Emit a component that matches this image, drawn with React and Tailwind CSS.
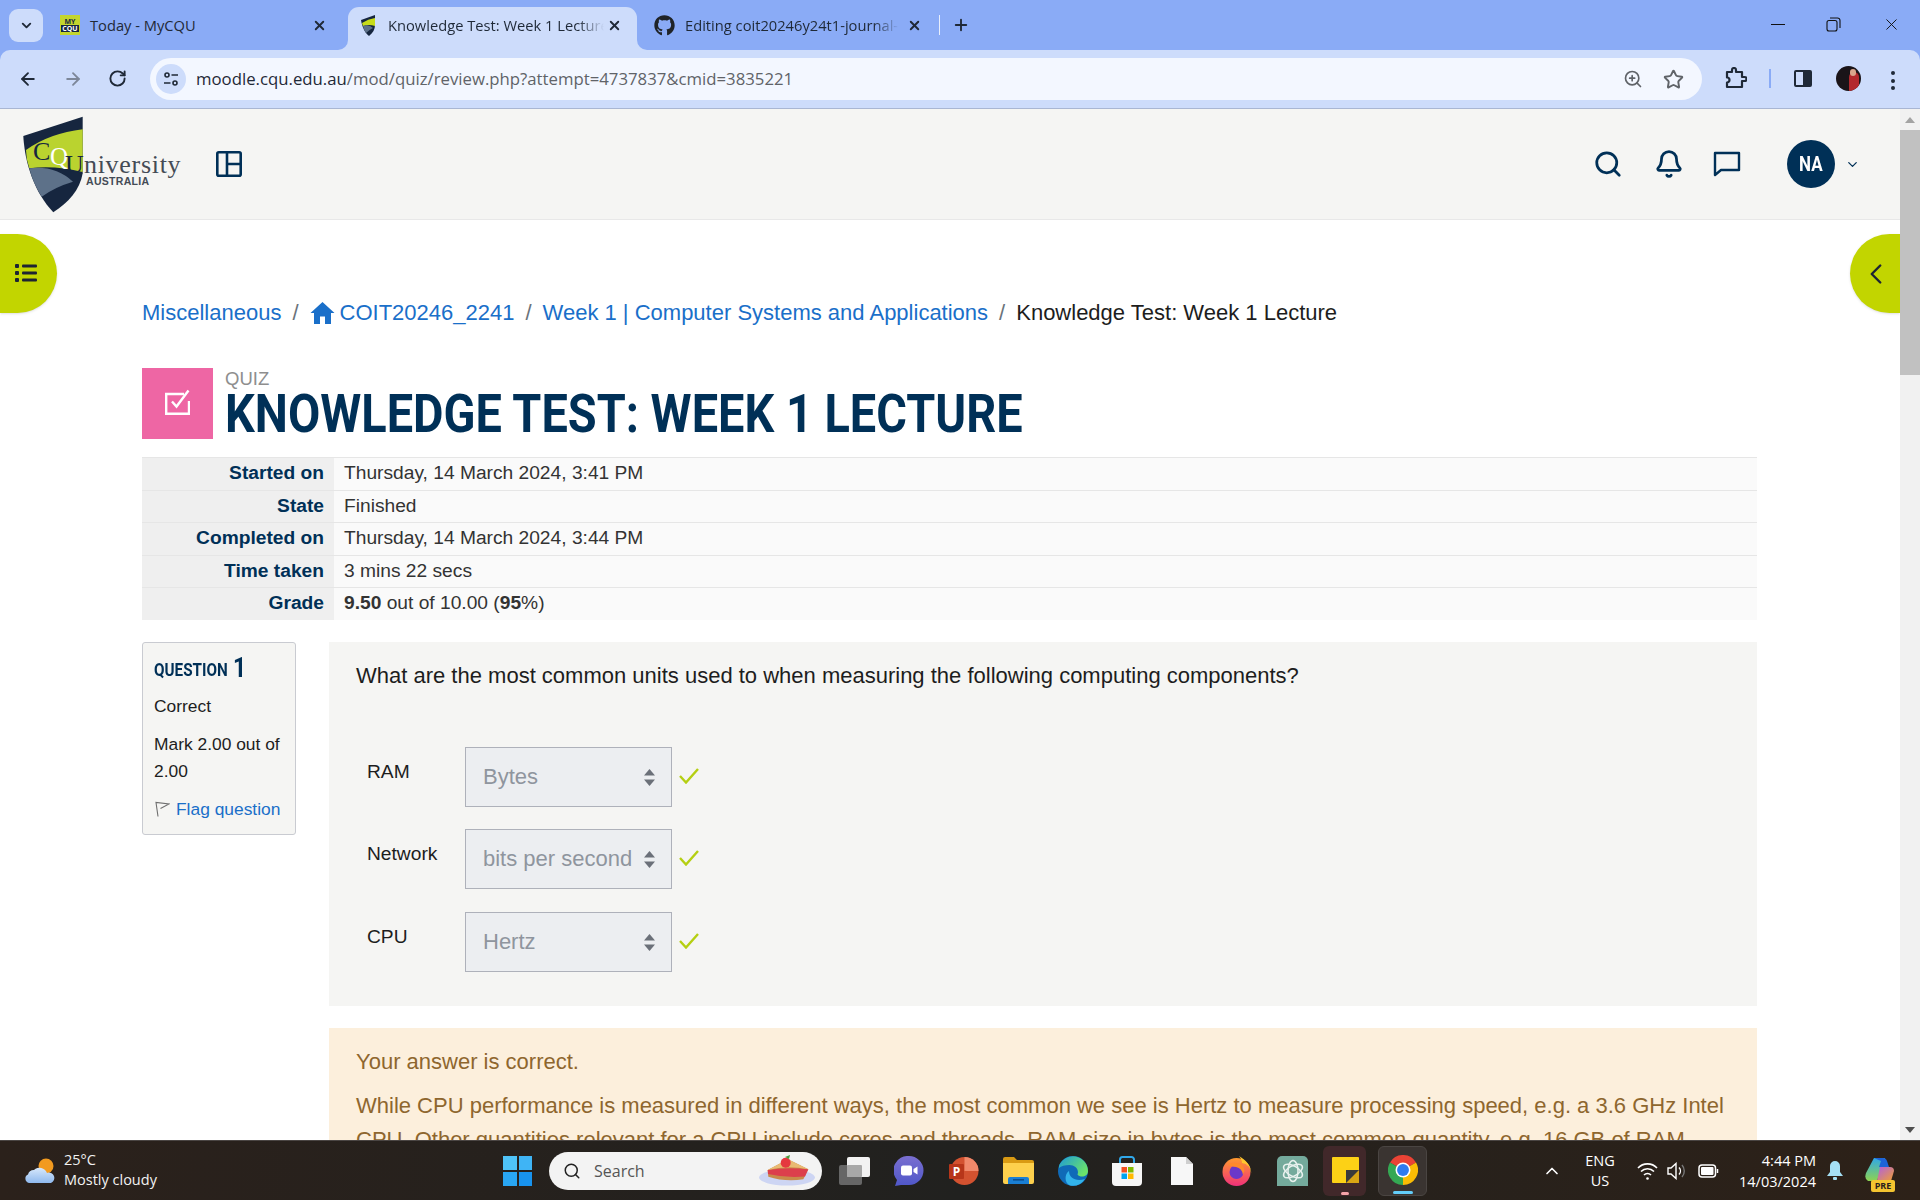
import {
  ArrowLeft,
  ArrowRight,
  RotateCw,
  ZoomIn,
  Star,
  X,
  Plus,
  ChevronDown,
  ChevronUp,
  ChevronLeft,
  Search,
  Bell,
} from "lucide-react";
import { FaGithub } from "react-icons/fa";

function ChromeLogo({ size = 30 }) {
  return (
    <svg width={size} height={size} viewBox="0 0 48 48">
      <path d="M24 24L3.2 12A24 24 0 0 1 44.8 12Z" fill="#ea4335" />
      <path d="M24 24L44.8 12A24 24 0 0 1 24 48Z" fill="#fbbc04" />
      <path d="M24 24L24 48A24 24 0 0 1 3.2 12Z" fill="#34a853" />
      <circle cx="24" cy="24" r="12" fill="#fff" />
      <circle cx="24" cy="24" r="9.5" fill="#2f7bf0" />
    </svg>
  );
}

function CquLogo() {
  return (
    <svg width="170" height="100" viewBox="0 0 170 100" className="ml-[20px] mt-[2px] shrink-0">
      <path d="M62.7 1.7L3.3 21C5 50 15 78 33.3 97.3C48 88 60 75 62.7 58.3Z" fill="#16263f" />
      <path d="M6 35Q30 18 62.7 14.3V57Q35 50 9.3 53.3Q6 44 6 35Z" fill="#bad32f" />
      <path d="M9.3 53.3Q35 50 53 66.7Q35 72 21.7 81.7Q13 68 9.3 53.3Z" fill="#5d7189" />
      <text x="13" y="45" className="font-['Liberation_Serif'] text-[26px]" fill="#16263f">C</text>
      <text x="30" y="50" className="font-['Liberation_Serif'] text-[25px]" fill="#fff">Q</text>
      <text x="45" y="58" className="font-['Liberation_Serif'] text-[26px]" fill="#16263f">U</text>
      <text x="64" y="58" className="font-['Liberation_Serif'] text-[26px] tracking-[0.7px]" fill="#444b55">niversity</text>
      <text x="66" y="70" className="font-['Liberation_Sans'] font-bold text-[10.5px] tracking-[0.3px]" fill="#444b55">AUSTRALIA</text>
    </svg>
  );
}

function TabStrip() {
  return (
    <div className="h-[50px] bg-[#8aabf6] flex shrink-0 text-[14.7px] font-['Open_Sans',sans-serif] text-[#1f2937]">
      <div className="ml-[9px] mt-[9px] w-[34px] h-[33px] rounded-[9px] bg-[#cddcfb] flex items-center justify-center">
        <ChevronDown size={15} strokeWidth={3} />
      </div>
      <div className="ml-[17px] w-[288px] h-[50px] flex items-center">
        <div className="w-[20px] h-[20px] bg-[#c3d52d] flex flex-col items-center justify-center text-[7px] leading-[7px] font-bold text-[#16263f]">
          <span>MY</span>
          <span className="bg-[#16263f] text-white px-[1px]">CQU</span>
        </div>
        <span className="ml-[10px] w-[220px] whitespace-nowrap">Today - MyCQU</span>
        <X size={15} strokeWidth={3} className="ml-[2px]" />
      </div>
      <div className="mt-[7px] w-[289px] h-[43px] rounded-t-[11px] bg-[#cddcfb] flex items-center pb-[7px] relative">
        <div className="absolute -left-[10px] bottom-0 w-[10px] h-[10px] bg-[#cddcfb]">
          <div className="w-full h-full rounded-br-[10px] bg-[#8aabf6]" />
        </div>
        <div className="absolute -right-[10px] bottom-0 w-[10px] h-[10px] bg-[#cddcfb]">
          <div className="w-full h-full rounded-bl-[10px] bg-[#8aabf6]" />
        </div>
        <svg width="15" height="21" viewBox="0 0 15 21" className="ml-[13px]">
          <path d="M14 0L0 5C1 12 4 18 8 21C12 18 14 14 14 10Z" fill="#16263f" />
          <path d="M1 8Q7 4 14 3V11Q8 9 2 11Z" fill="#c7dc1a" />
          <path d="M2 11Q8 9 12 13Q8 15 5 18Q3 15 2 11Z" fill="#5d7189" />
        </svg>
        <span className="ml-[12px] w-[216px] overflow-hidden whitespace-nowrap [mask-image:linear-gradient(to_right,black_88%,transparent)]">
          Knowledge Test: Week 1 Lecture
        </span>
        <X size={15} strokeWidth={3} className="ml-[3px]" />
      </div>
      <div className="ml-[17px] w-[268px] h-[50px] flex items-center">
        <FaGithub size={21} color="#1f2328" />
        <span className="ml-[10px] w-[214px] overflow-hidden whitespace-nowrap [mask-image:linear-gradient(to_right,black_88%,transparent)]">
          Editing coit20246y24t1-journal-
        </span>
        <X size={15} strokeWidth={3} className="ml-[8px]" />
      </div>
      <div className="ml-[17px] mt-[15px] w-[1px] h-[20px] bg-[#e8eefc]" />
      <Plus size={18} strokeWidth={2.5} className="ml-[12px] mt-[16px]" />
      <div className="ml-auto flex items-start pt-[17px] text-[#111]">
        <div className="w-[14px] h-[1px] bg-[#111] mt-[7px]" />
        <svg width="15" height="15" viewBox="0 0 15 15" className="ml-[41px]" fill="none" stroke="#111" strokeWidth="1.1">
          <rect x="1" y="3.5" width="10" height="10.5" rx="2" />
          <path d="M4 1H11.5A2.5 2.5 0 0 1 14 3.5V11" />
        </svg>
        <X size={19} strokeWidth={1.2} className="ml-[41px] mr-[19px] -mt-[2px]" />
      </div>
    </div>
  );
}

function Toolbar() {
  return (
    <div className="h-[59px] bg-[#cddcfb] border-b border-[#a9b6d3] rounded-t-[10px] flex items-start shrink-0 font-['Open_Sans',sans-serif]">
      <ArrowLeft size={20} strokeWidth={2.2} className="ml-[18px] mt-[19px] text-[#1f2937]" />
      <ArrowRight size={20} strokeWidth={2.2} className="ml-[25px] mt-[19px] text-[#7d8799]" />
      <RotateCw size={19} strokeWidth={2.4} className="ml-[25px] mt-[19px] text-[#1f2937]" />
      <div className="ml-[23px] mt-[8px] w-[1552px] h-[42px] rounded-full bg-[#f3f7ff] flex items-center">
        <div className="ml-[6px] w-[30px] h-[30px] rounded-full bg-[#cddcfb] flex items-center justify-center">
          <svg width="16" height="16" viewBox="0 0 16 16" fill="none" stroke="#1f2937" strokeWidth="1.6">
            <circle cx="4" cy="4" r="2" />
            <path d="M8.5 4H15M1 12H7.5" />
            <circle cx="12" cy="12" r="2" />
          </svg>
        </div>
        <span className="ml-[10px] text-[16.75px] whitespace-nowrap text-[#1f2937]">
          moodle.cqu.edu.au<span className="text-[#5f6368]">/mod/quiz/review.php?attempt=4737837&amp;cmid=3835221</span>
        </span>
        <ZoomIn size={20} strokeWidth={2} className="ml-auto text-[#5f6368]" />
        <Star size={21} strokeWidth={2.2} className="ml-[20px] mr-[18px] text-[#5f6368]" />
      </div>
      <svg width="22" height="22" viewBox="0 0 22 22" className="ml-[23px] mt-[17px]" fill="none" stroke="#1f2937" strokeWidth="2.2" strokeLinejoin="round">
        <path d="M2 5H7V3A2 2 0 0 1 11 3V5H17V10H19.5A2 2 0 0 1 19.5 14H17V20H2V15.5A2.5 2.5 0 0 0 2 10.5Z" />
      </svg>
      <div className="ml-[22px] mt-[19px] w-[2px] h-[19px] bg-[#8aabf6]" />
      <div className="ml-[23px] mt-[20px] w-[18px] h-[17px] rounded-[2px] border-2 border-[#1f2937] flex justify-end">
        <div className="w-[7px] h-full bg-[#1f2937] order-first" />
      </div>
      <div className="ml-[24px] mt-[16px] w-[25px] h-[25px] rounded-full bg-[#1a1418] overflow-hidden relative">
        <div className="absolute right-[2px] top-[6px] w-[10px] h-[19px] bg-[#b3282d] rounded-t-[5px]" />
        <div className="absolute right-[5px] top-[3px] w-[6px] h-[7px] bg-[#d9a58c] rounded-full" />
      </div>
      <div className="ml-[30px] mt-[21px] flex flex-col gap-[3.5px]">
        <div className="w-[4px] h-[4px] rounded-full bg-[#1f2937]" />
        <div className="w-[4px] h-[4px] rounded-full bg-[#1f2937]" />
        <div className="w-[4px] h-[4px] rounded-full bg-[#1f2937]" />
      </div>
    </div>
  );
}

function SiteHeader() {
  return (
    <div className="h-[111px] bg-[#f5f5f3] border-b border-[#e8e8e8] flex items-center shrink-0 text-[#003057]">
      <CquLogo />
      <svg width="26" height="26" viewBox="0 0 26 26" className="ml-[26px]" fill="none" stroke="#003057" strokeWidth="2.6">
        <rect x="1.3" y="1.3" width="23.4" height="23.4" rx="1.5" />
        <path d="M11 1.3V24.7M11 13H24.7" />
      </svg>
      <Search size={30} strokeWidth={2.2} className="ml-auto" />
      <Bell size={30} strokeWidth={2.2} className="ml-[31px]" />
      <svg width="28" height="26" viewBox="0 0 28 26" className="ml-[29px]" fill="none" stroke="#003057" strokeWidth="2.4" strokeLinejoin="round">
        <path d="M2 2H26V19H8L2 24Z" />
      </svg>
      <div className="ml-[46px] w-[48px] h-[48px] rounded-full bg-[#003057] flex items-center justify-center text-white font-['Roboto',sans-serif] font-bold text-[20px]">
        <span className="scale-x-[0.85]">NA</span>
      </div>
      <ChevronDown size={15} strokeWidth={2} className="ml-[10px] mr-[40px]" />
    </div>
  );
}

const summaryRows = [
  ["Started on", "Thursday, 14 March 2024, 3:41 PM"],
  ["State", "Finished"],
  ["Completed on", "Thursday, 14 March 2024, 3:44 PM"],
  ["Time taken", "3 mins 22 secs"],
];

function SummaryRow({ label, children }) {
  return (
    <div className="flex h-[32.6px] border-t border-[#e6e6e6]">
      <div className="w-[192px] bg-[#efefef] pr-[10px] text-right font-bold text-[#003057] leading-[30px]">{label}</div>
      <div className="flex-1 bg-[#fafafa] pl-[10px] text-[#333] leading-[30px]">{children}</div>
    </div>
  );
}

function AnswerRow({ label, value, mt }) {
  return (
    <div className={`flex items-start ${mt}`}>
      <div className="w-[98px] pt-[12px] text-[19.2px] leading-[26px] text-[#1d1d1d]">{label}</div>
      <div className="w-[207px] h-[60px] border border-[#aeb1ba] bg-[#eceef1] flex items-center pl-[17px] text-[22px] text-[#8f959e] relative whitespace-nowrap">
        {value}
        <svg width="11" height="17" viewBox="0 0 11 17" className="absolute right-[16px] top-[21px]" fill="#6b7079">
          <path d="M5.5 0L11 6.5H0Z" />
          <path d="M5.5 17L0 10.5H11Z" />
        </svg>
      </div>
      <svg width="20" height="16" viewBox="0 0 20 16" className="ml-[7px] mt-[21px]" fill="none" stroke="#b5cf12" strokeWidth="2.4">
        <path d="M1 8L7 14.5L19 1" />
      </svg>
    </div>
  );
}

function Content() {
  return (
    <div className="flex-1 min-h-0 overflow-hidden relative bg-white">
      <div className="absolute left-0 top-[14px] w-[57px] h-[79px] rounded-r-[40px] bg-[#c2d500] flex items-center pl-[15px] pb-[2px] shadow-sm">
        <svg width="22" height="18" viewBox="0 0 22 18" fill="#1d2433">
          <rect x="0" y="0" width="4" height="4" rx="1" />
          <rect x="0" y="7" width="4" height="4" rx="1" />
          <rect x="0" y="14" width="4" height="4" rx="1" />
          <rect x="7" y="0.5" width="15" height="3" rx="1" />
          <rect x="7" y="7.5" width="15" height="3" rx="1" />
          <rect x="7" y="14.5" width="15" height="3" rx="1" />
        </svg>
      </div>
      <div className="absolute right-0 top-[14px] w-[50px] h-[79px] rounded-l-[40px] bg-[#c2d500] flex items-center pl-[9px] shadow-sm">
        <ChevronLeft size={34} strokeWidth={1.7} className="text-[#1d2433]" />
      </div>

      <div className="ml-[142px] w-[1615px] pt-[76px]">
        <div className="flex items-center h-[33px] text-[22px] text-[#1a6fc9] whitespace-nowrap">
          <span>Miscellaneous</span>
          <span className="mx-[11px] text-[#6a737b]">/</span>
          <svg width="25" height="22" viewBox="0 0 24 22" fill="#1a6fc9" className="mr-[5px]">
            <path d="M12 0L24 11H20.5V22H14.5V14.5H9.5V22H3.5V11H0Z" />
          </svg>
          <span>COIT20246_2241</span>
          <span className="mx-[11px] text-[#6a737b]">/</span>
          <span>Week 1 | Computer Systems and Applications</span>
          <span className="mx-[11px] text-[#6a737b]">/</span>
          <span className="text-[#1d1d1d]">Knowledge Test: Week 1 Lecture</span>
        </div>

        <div className="flex mt-[39px] h-[71px]">
          <div className="w-[71px] h-[71px] bg-[#ee66a4] flex items-center justify-center pb-[4px]">
            <svg width="25" height="26" viewBox="0 0 25 26" fill="none" stroke="#fff" strokeWidth="2.4">
              <path d="M19 5H1.2V24.8H24V12" />
              <path d="M7 12.5L11.5 17.5L23.5 1.5" />
            </svg>
          </div>
          <div className="ml-[12px]">
            <div className="text-[18.5px] leading-[20px] pt-[1px] text-[#8e8e8e]">QUIZ</div>
            <div className="text-[53px] leading-[50px] font-bold font-['Roboto',sans-serif] text-[#003057] whitespace-nowrap origin-left scale-x-[0.885]">
              KNOWLEDGE TEST: WEEK 1 LECTURE
            </div>
          </div>
        </div>

        <div className="mt-[18px] text-[19.2px]">
          {summaryRows.map(([label, value]) => (
            <SummaryRow key={label} label={label}>{value}</SummaryRow>
          ))}
          <SummaryRow label="Grade">
            <b>9.50</b> out of 10.00 (<b>95</b>%)
          </SummaryRow>
        </div>

        <div className="flex items-start mt-[22px]">
          <div className="w-[154px] h-[193px] shrink-0 border border-[#c9cbd1] rounded-[3px] bg-[#f5f5f3] pl-[11px] pt-[10px] text-[17.4px] text-[#1d1d1d]">
            <div className="h-[30px] flex items-center text-[#003057] font-bold font-['Roboto',sans-serif] whitespace-nowrap">
              <span className="text-[18.6px] inline-block origin-left scale-x-[0.82] w-[76px] mt-[6px]">QUESTION</span>
              <span className="text-[28px] ml-[3px] origin-left scale-x-[0.82]">1</span>
            </div>
            <div className="mt-[10px] leading-[27px]">Correct</div>
            <div className="mt-[11px] leading-[26.7px]">Mark 2.00 out of 2.00</div>
            <div className="mt-[12px] flex items-center leading-[26px]">
              <svg width="15" height="16" viewBox="0 0 15 16" fill="none" stroke="#6f6f6f" strokeWidth="1.1" className="ml-[1px]">
                <path d="M3 15.5L1 1.5L14 3L5.5 7.5" />
              </svg>
              <span className="ml-[6px] text-[#1a6fc9] whitespace-nowrap">Flag question</span>
            </div>
          </div>

          <div className="ml-[33px] flex-1">
            <div className="h-[364px] bg-[#f5f5f3] pl-[27px] pt-[17px]">
              <div className="text-[22px] leading-[33px] text-[#1d1d1d]">
                What are the most common units used to when measuring the following computing components?
              </div>
              <div className="ml-[11px] mt-[55px]">
                <AnswerRow label="RAM" value="Bytes" mt="" />
                <AnswerRow label="Network" value="bits per second" mt="mt-[22px]" />
                <AnswerRow label="CPU" value="Hertz" mt="mt-[23px]" />
              </div>
            </div>
            <div className="mt-[22px] bg-[#fcefdc] px-[27px] pt-[17px] pb-[20px] text-[22px] leading-[34px] text-[#8e662e]">
              <div>Your answer is correct.</div>
              <div className="mt-[10px]">
                While CPU performance is measured in different ways, the most common we see is Hertz to measure processing speed, e.g. a 3.6 GHz Intel CPU. Other quantities relevant for a CPU include cores and threads. RAM size in bytes is the most common quantity, e.g. 16 GB of RAM.
              </div>
            </div>
          </div>
        </div>
      </div>
    </div>
  );
}

function Scrollbar() {
  return (
    <div className="w-[20px] bg-[#f1f1f1] shrink-0 flex flex-col items-center">
      <div className="h-[21px] flex items-center">
        <div className="w-0 h-0 border-x-[5px] border-x-transparent border-b-[6px] border-b-[#a3a3a3]" />
      </div>
      <div className="w-full h-[245px] bg-[#c1c1c1]" />
      <div className="mt-auto h-[21px] flex items-center">
        <div className="w-0 h-0 border-x-[5px] border-x-transparent border-t-[6px] border-t-[#505050]" />
      </div>
    </div>
  );
}

function Taskbar() {
  return (
    <div className="h-[60px] bg-linear-to-r from-[#2b211b] via-[#21211f] to-[#2d2118] border-t border-[#4a4543] flex items-center shrink-0 text-white font-['Open_Sans',sans-serif] text-[14.5px] relative">
      {/* weather */}
      <svg width="32" height="26" viewBox="0 0 32 26" className="ml-[24px]">
        <defs>
          <linearGradient id="cloud" x1="0" y1="0" x2="0" y2="1">
            <stop offset="0" stopColor="#d7e8fb" />
            <stop offset="1" stopColor="#8fb9ee" />
          </linearGradient>
        </defs>
        <circle cx="22" cy="8" r="7.5" fill="#f29a1f" />
        <path d="M5 25A4.5 4.5 0 0 1 4 16.5A6 6 0 0 1 10 12A8 8 0 0 1 23 15A5 5 0 0 1 27 25Z" fill="url(#cloud)" />
      </svg>
      <div className="ml-[8px] w-[100px] leading-[20px] text-[#f2f2f2] -mt-[1px]">
        <div>25°C</div>
        <div className="whitespace-nowrap">Mostly cloudy</div>
      </div>

      {/* start */}
      <div className="ml-[339px] grid grid-cols-2 gap-[2px] w-[29px]">
        <div className="h-[14px] bg-[#4fc3f7]" />
        <div className="h-[14px] bg-[#3fb4f5]" />
        <div className="h-[14px] bg-[#29a6f3]" />
        <div className="h-[14px] bg-[#1893ee]" />
      </div>

      {/* search */}
      <div className="ml-[17px] w-[273px] h-[38px] rounded-full bg-[#f3f3f3] flex items-center relative">
        <Search size={18} strokeWidth={2} className="ml-[14px] text-[#222]" />
        <span className="ml-[13px] text-[16px] text-[#555]">Search</span>
        <svg width="56" height="34" viewBox="0 0 56 34" className="absolute right-[7px] top-[2px]">
          <ellipse cx="28" cy="23.5" rx="28" ry="8" fill="#cdd5f3" />
          <path d="M8.7 16L29 5.3L49.3 15.3L44.3 25.3Q26 28 9.3 22.7Z" fill="#c98a4a" />
          <path d="M8.7 16Q28 13 49.3 15.3L46 22.5Q26 24 9 20Z" fill="#dc3f4c" />
          <path d="M8.7 16L29 5.3L49.3 15.3Q28 11 8.7 16Z" fill="#e9ba72" />
          <circle cx="26.7" cy="8.7" r="5" fill="#e5383f" />
          <path d="M26 3L31 1L30 5Z" fill="#4a9b3c" />
        </svg>
      </div>

      {/* pinned apps */}
      <svg width="31" height="28" viewBox="0 0 31 28" className="ml-[17px]">
        <rect x="0" y="8" width="23" height="20" rx="2" fill="#666" />
        <rect x="8" y="0" width="23" height="20" rx="2" fill="#f2f2f2" />
        <rect x="8" y="8" width="15" height="12" rx="1" fill="#a8a8a8" />
      </svg>
      <svg width="30" height="30" viewBox="0 0 30 30" className="ml-[24px]">
        <defs>
          <linearGradient id="teams" x1="0" y1="0" x2="0" y2="1">
            <stop offset="0" stopColor="#7a6fd0" />
            <stop offset="1" stopColor="#4f57c9" />
          </linearGradient>
        </defs>
        <path d="M15 0A14.5 14.5 0 0 1 15 29H7L1 30L3 24A14.5 14.5 0 0 1 15 0Z" fill="url(#teams)" />
        <rect x="7" y="9.5" width="11" height="10" rx="2" fill="#fff" />
        <path d="M19.5 13L23.5 10.5V18.5L19.5 16Z" fill="#fff" />
      </svg>
      <div className="ml-[25px] w-[30px] h-[28px] relative">
        <svg width="30" height="28" viewBox="0 0 30 28">
          <circle cx="15.5" cy="14" r="14" fill="#d35230" />
          <path d="M15.5 0A14 14 0 0 1 29.5 14H15.5Z" fill="#f0896b" />
        </svg>
        <div className="absolute left-0 top-[7px] w-[15px] h-[15px] rounded-[1px] bg-[#b7361a] text-[12px] leading-[15px] font-bold text-center">P</div>
      </div>
      <svg width="31" height="27" viewBox="0 0 31 27" className="ml-[24px]">
        <path d="M0 2A2 2 0 0 1 2 0H11L14 3H29A2 2 0 0 1 31 5V12H0Z" fill="#d99a13" />
        <path d="M0 6H31V25A2 2 0 0 1 29 27H2A2 2 0 0 1 0 25Z" fill="#fdd04d" />
        <path d="M5 27V22A2 2 0 0 1 7 20H24A2 2 0 0 1 26 22V27Z" fill="#1a7fd4" />
        <rect x="10" y="22" width="11" height="1.6" fill="#0b4f8f" />
      </svg>
      <svg width="30" height="30" viewBox="0 0 30 30" className="ml-[24px]">
        <defs>
          <linearGradient id="edgeTop" x1="0" y1="0" x2="1" y2="0.6">
            <stop offset="0" stopColor="#1d9bd8" />
            <stop offset="1" stopColor="#6be36a" />
          </linearGradient>
        </defs>
        <circle cx="15" cy="15" r="15" fill="#0f6ab8" />
        <path d="M1 10A15 15 0 0 1 30 15C30 21 22 22 19.5 18.5C21.5 13.5 17 9 11.5 9C7 9 3 10 1 12Z" fill="url(#edgeTop)" />
        <path d="M11 15C11 22 18 26 27 23A15 15 0 0 1 12 29.6C6 27 6.5 18 11 15Z" fill="#32b3ea" />
      </svg>
      <svg width="30" height="30" viewBox="0 0 30 30" className="ml-[24px]">
        <path d="M8 8V3.5A2.5 2.5 0 0 1 10.5 1H19.5A2.5 2.5 0 0 1 22 3.5V8" fill="none" stroke="#30a8ea" strokeWidth="2" />
        <path d="M0 7H30V26A4 4 0 0 1 26 30H4A4 4 0 0 1 0 26Z" fill="#f6f6f6" />
        <rect x="9.5" y="11" width="5.5" height="5.5" fill="#f25022" />
        <rect x="16" y="11" width="5.5" height="5.5" fill="#7fba00" />
        <rect x="9.5" y="17.5" width="5.5" height="5.5" fill="#00a4ef" />
        <rect x="16" y="17.5" width="5.5" height="5.5" fill="#ffb900" />
      </svg>
      <svg width="22" height="28" viewBox="0 0 22 28" className="ml-[29px]">
        <path d="M0 0H15L22 7V28H0Z" fill="#f7f7f7" />
        <path d="M15 0L22 7H15Z" fill="#cfcfcf" />
      </svg>
      <svg width="30" height="30" viewBox="0 0 30 30" className="ml-[29px]">
        <defs>
          <linearGradient id="fox" x1="0" y1="0" x2="0" y2="1">
            <stop offset="0" stopColor="#ff9a2e" />
            <stop offset="1" stopColor="#f0307a" />
          </linearGradient>
        </defs>
        <circle cx="14.5" cy="16" r="14" fill="url(#fox)" />
        <path d="M17 0C25 5 30 11 29 18A10 10 0 0 0 20 7C20 5 19 2 17 0Z" fill="#ffc82e" />
        <circle cx="14.5" cy="16" r="7" fill="#6b38c9" />
        <path d="M6 8Q14 5 20 9Q24 13 21 19Q20 12 14 11Q9 11 6 8Z" fill="#ff8a2c" />
      </svg>
      <div className="ml-[25px] w-[31px] h-[30px] rounded-t-[5px] bg-[#74aa9c] flex items-center justify-center">
        <svg width="24" height="24" viewBox="0 0 24 24" fill="none" stroke="#e8f1ee" strokeWidth="1.5">
          <ellipse cx="12" cy="12" rx="5" ry="10.5" />
          <ellipse cx="12" cy="12" rx="5" ry="10.5" transform="rotate(60 12 12)" />
          <ellipse cx="12" cy="12" rx="5" ry="10.5" transform="rotate(120 12 12)" />
        </svg>
      </div>
      <div className="ml-[15px] w-[43px] h-[50px] rounded-[6px] bg-[#41282a] flex flex-col items-center relative">
        <div className="mt-[11px] ml-[1px] w-[27px] h-[26px] bg-[#fcd116] relative rounded-[1px] overflow-hidden">
          <div className="absolute right-0 bottom-0 w-[13px] h-[13px] bg-[#d9a514]" />
          <div className="absolute right-0 bottom-0 w-0 h-0 border-r-[13px] border-r-transparent border-t-[13px] border-t-[#3a3a3a]" />
        </div>
        <div className="absolute bottom-[1px] w-[8px] h-[3px] rounded-full bg-[#f4a3a8]" />
      </div>
      <div className="ml-[12px] w-[49px] h-[50px] rounded-[6px] bg-[#3a3431] border border-[#4a4542] flex flex-col items-center relative">
        <div className="mt-[8px]"><ChromeLogo /></div>
        <div className="absolute bottom-[1px] w-[20px] h-[3px] rounded-full bg-[#63cdf8]" />
      </div>

      {/* tray */}
      <ChevronUp size={20} strokeWidth={2} className="ml-[115px]" />
      <div className="ml-[18px] w-[40px] text-center leading-[20px]">
        <div>ENG</div>
        <div>US</div>
      </div>
      <svg width="21" height="20" viewBox="0 0 21 20" className="ml-[17px]" fill="none" stroke="#fff" strokeWidth="1.6">
        <path d="M1 7A13 13 0 0 1 20 7M4 10.5A9 9 0 0 1 17 10.5M7 14A5 5 0 0 1 14 14" />
        <circle cx="10.5" cy="17.5" r="1.3" fill="#fff" stroke="none" />
      </svg>
      <svg width="19" height="18" viewBox="0 0 19 18" className="ml-[9px]" fill="none" stroke="#fff" strokeWidth="1.4">
        <path d="M1 6H4L9 1.5V16.5L4 12H1Z" />
        <path d="M12 5.5A5 5 0 0 1 12 12.5" />
        <path d="M15 3A9 9 0 0 1 15 15" stroke="#777" />
      </svg>
      <svg width="21" height="14" viewBox="0 0 21 14" className="ml-[12px]" fill="none" stroke="#fff" strokeWidth="1.5">
        <rect x="1" y="1" width="16.5" height="12" rx="3" />
        <rect x="3" y="3" width="12.5" height="8" rx="1" fill="#fff" stroke="none" />
        <path d="M19.5 5V9" />
      </svg>
      <div className="text-right leading-[21px] absolute right-[104px]">
        <div>4:44 PM</div>
        <div>14/03/2024</div>
      </div>
      <svg width="16" height="20" viewBox="0 0 16 20" className="absolute right-[77px]" fill="#a5e0f5">
        <path d="M8 0A5 5 0 0 1 13 5V11L16 15H0L3 11V5A5 5 0 0 1 8 0Z" />
        <rect x="6" y="16" width="4" height="3" rx="1" />
      </svg>
      <div className="absolute right-[25px] top-[16px] w-[30px] h-[38px]">
        <svg width="30" height="26" viewBox="0 0 30 26">
          <defs>
            <linearGradient id="copA" x1="0" y1="0" x2="0" y2="1">
              <stop offset="0" stopColor="#2fa8e8" />
              <stop offset="1" stopColor="#8ed34f" />
            </linearGradient>
            <linearGradient id="copB" x1="0" y1="0" x2="1" y2="1">
              <stop offset="0" stopColor="#b05fe0" />
              <stop offset="1" stopColor="#f0a030" />
            </linearGradient>
          </defs>
          <path d="M9 1H20L12 24H3Q-1 22 1 16Z" fill="url(#copA)" />
          <path d="M15 10H25Q29 10 29 14L26 24H12Z" fill="url(#copB)" />
          <path d="M9 1H18Q21 1 22 4L24 10H14L16 4Z" fill="#1d63d8" />
        </svg>
        <div className="absolute bottom-[3px] left-[6px] w-[24px] h-[12px] rounded-[2px] bg-[#f4c430] text-[#2a211d] text-[9px] leading-[12px] font-bold text-center">PRE</div>
      </div>
    </div>
  );
}

export default function App() {
  return (
    <div className="w-[1920px] h-[1200px] flex flex-col overflow-hidden bg-[#8aabf6] font-['Liberation_Sans',Arial,sans-serif]">
      <TabStrip />
      <Toolbar />
      <div className="flex-1 min-h-0 flex">
        <div className="flex-1 min-w-0 flex flex-col">
          <SiteHeader />
          <Content />
        </div>
        <Scrollbar />
      </div>
      <Taskbar />
    </div>
  );
}
